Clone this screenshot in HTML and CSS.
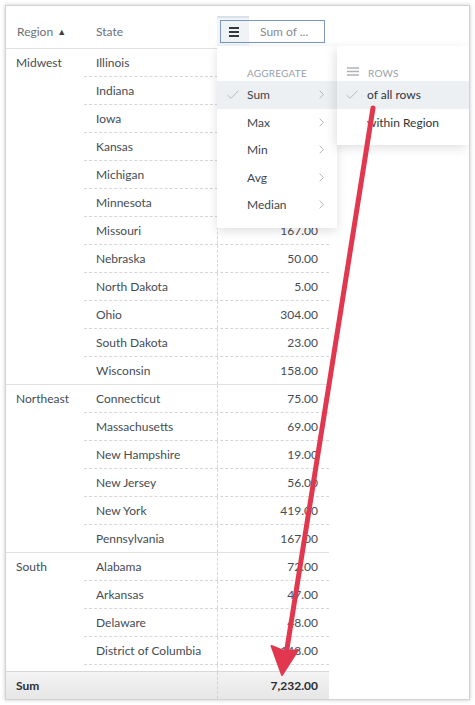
FILE: index.html
```html
<!DOCTYPE html>
<html>
<head>
<meta charset="utf-8">
<link rel="stylesheet" href="styles.css">
</head>
<body>
<div class="card">
  <div class="table">
    <div class="head">
      <div class="h1">Region <span class="sort">&#9650;</span></div>
      <div class="h2">State</div>
      <div class="h3">
        <div class="col-hl"></div>
        <div class="agg-btn">
          <span class="agg-icon"><i></i><i></i><i></i></span>
          <span class="agg-text">Sum of ...</span>
        </div>
      </div>
    </div>
    <div class="rows">
      <div class="group">
        <div class="region">Midwest</div>
        <div class="states">
          <div class="row"><div class="state">Illinois</div><div class="val">262.00</div></div>
          <div class="row"><div class="state">Indiana</div><div class="val">151.00</div></div>
          <div class="row"><div class="state">Iowa</div><div class="val">83.00</div></div>
          <div class="row"><div class="state">Kansas</div><div class="val">66.00</div></div>
          <div class="row"><div class="state">Michigan</div><div class="val">228.00</div></div>
          <div class="row"><div class="state">Minnesota</div><div class="val">122.00</div></div>
          <div class="row"><div class="state">Missouri</div><div class="val">167.00</div></div>
          <div class="row"><div class="state">Nebraska</div><div class="val">50.00</div></div>
          <div class="row"><div class="state">North Dakota</div><div class="val">5.00</div></div>
          <div class="row"><div class="state">Ohio</div><div class="val">304.00</div></div>
          <div class="row"><div class="state">South Dakota</div><div class="val">23.00</div></div>
          <div class="row"><div class="state">Wisconsin</div><div class="val">158.00</div></div>
        </div>
      </div>
      <div class="group">
        <div class="region">Northeast</div>
        <div class="states">
          <div class="row"><div class="state">Connecticut</div><div class="val">75.00</div></div>
          <div class="row"><div class="state">Massachusetts</div><div class="val">69.00</div></div>
          <div class="row"><div class="state">New Hampshire</div><div class="val">19.00</div></div>
          <div class="row"><div class="state">New Jersey</div><div class="val">56.00</div></div>
          <div class="row"><div class="state">New York</div><div class="val">419.00</div></div>
          <div class="row"><div class="state">Pennsylvania</div><div class="val">167.00</div></div>
        </div>
      </div>
      <div class="group">
        <div class="region">South</div>
        <div class="states">
          <div class="row"><div class="state">Alabama</div><div class="val">72.00</div></div>
          <div class="row"><div class="state">Arkansas</div><div class="val">47.00</div></div>
          <div class="row"><div class="state">Delaware</div><div class="val">48.00</div></div>
          <div class="row"><div class="state">District of Columbia</div><div class="val">148.00</div></div>
          <div class="row"><div class="state"></div><div class="val"></div></div>
        </div>
      </div>
    </div>
    <div class="foot">
      <div class="f1">Sum</div>
      <div class="f2">7,232.00</div>
    </div>
  </div>

  <div class="menu">
    <div class="menu-label">AGGREGATE</div>
    <div class="item active">
      <svg class="check" width="12" height="9" viewBox="0 0 12 9"><polyline points="0.5,5 4,8.3 11.5,0.7" fill="none" stroke="#b4b8bd" stroke-width="1"/></svg>
      <span>Sum</span>
      <svg class="chev" width="5" height="9" viewBox="0 0 5 9"><polyline points="0.6,0.6 4.4,4.5 0.6,8.4" fill="none" stroke="#b4b8bd" stroke-width="1"/></svg>
    </div>
    <div class="item"><span>Max</span><svg class="chev" width="5" height="9" viewBox="0 0 5 9"><polyline points="0.6,0.6 4.4,4.5 0.6,8.4" fill="none" stroke="#b4b8bd" stroke-width="1"/></svg></div>
    <div class="item"><span>Min</span><svg class="chev" width="5" height="9" viewBox="0 0 5 9"><polyline points="0.6,0.6 4.4,4.5 0.6,8.4" fill="none" stroke="#b4b8bd" stroke-width="1"/></svg></div>
    <div class="item"><span>Avg</span><svg class="chev" width="5" height="9" viewBox="0 0 5 9"><polyline points="0.6,0.6 4.4,4.5 0.6,8.4" fill="none" stroke="#b4b8bd" stroke-width="1"/></svg></div>
    <div class="item"><span>Median</span><svg class="chev" width="5" height="9" viewBox="0 0 5 9"><polyline points="0.6,0.6 4.4,4.5 0.6,8.4" fill="none" stroke="#b4b8bd" stroke-width="1"/></svg></div>
  </div>

  <div class="submenu">
    <div class="menu-label">
      <svg class="rows-icon" width="12" height="9" viewBox="0 0 12 9"><path d="M0 1h12M0 4.5h12M0 8h12" stroke="#aeb3b8" stroke-width="1.4"/></svg>
      ROWS
    </div>
    <div class="item active">
      <svg class="check" width="12" height="9" viewBox="0 0 12 9"><polyline points="0.5,5 4,8.3 11.5,0.7" fill="none" stroke="#b4b8bd" stroke-width="1"/></svg>
      <span class="sub-text">of all rows</span>
    </div>
    <div class="item"><span class="sub-text">within Region</span></div>
  </div>
</div>

<svg class="arrow" width="475" height="705" viewBox="0 0 475 705">
  <line x1="373" y1="108" x2="286" y2="655" stroke="#e2384f" stroke-width="5" stroke-linecap="round"/>
  <polygon points="282,675 271.5,646 285,651.5 298,650" fill="#e2384f" stroke="#e2384f" stroke-width="2" stroke-linejoin="round"/>
</svg>
</body>
</html>
```

FILE: styles.css
```css
* { box-sizing: border-box; }
html, body { margin: 0; padding: 0; background: #fff; }
body {
  position: relative;
  width: 475px;
  height: 705px;
  overflow: hidden;
  font-family: Lato, "Noto Sans", sans-serif;
  font-size: 12px;
  color: #464c53;
}
.card {
  position: relative;
  margin: 5px;
  width: 465px;
  height: 695px;
  border: 1px solid #d2d2d2;
  box-shadow: 0 0 4px rgba(0, 0, 0, 0.22);
  background: #fff;
  overflow: hidden;
}
.table { width: 323px; }

.head {
  display: flex;
  height: 43px;
  border-bottom: 1px solid #dfe1e4;
  color: #6b7178;
  line-height: 16px;
}
.h1 { width: 78px; padding: 18px 0 0 11px; }
.sort { font-size: 9px; color: #3d4247; position: relative; top: -1px; margin-left: 1px; }
.h2 { width: 133px; padding: 18px 0 0 12px; }
.h3 { width: 112px; position: relative; padding: 14px 0 0 3px; }
.col-hl {
  position: absolute;
  left: 0;
  top: 10px;
  width: 32px;
  height: 32px;
  background: #f2f5f8;
  border-top: 2px solid #d8e2ed;
}
.agg-btn {
  position: relative;
  display: flex;
  align-items: center;
  width: 105px;
  height: 23px;
  border: 1px solid #7b98bb;
  background: #fff;
}
.agg-icon {
  display: flex;
  flex-direction: column;
  justify-content: space-between;
  width: 28px;
  height: 100%;
  padding: 6px 10px 5px 8px;
  background: #eff2f6;
}
.agg-icon i { display: block; height: 2px; background: #33383d; }
.agg-text { padding-left: 11px; color: #858b91; }

.rows { height: 622px; overflow: hidden; }
.group { display: flex; border-bottom: 1px solid #dfe1e4; }
.region { width: 78px; padding-left: 10px; line-height: 27px; }
.states { width: 245px; }
.row { display: flex; height: 28px; border-bottom: 1px dashed #d4d7da; }
.row:last-child { height: 27px; border-bottom: 0; }
.state { width: 133px; padding-left: 12px; line-height: 27px; white-space: nowrap; }
.val {
  width: 112px;
  border-left: 1px dashed #d4d7da;
  text-align: right;
  padding-right: 11px;
  line-height: 27px;
}

.foot {
  display: flex;
  height: 28px;
  border-top: 1px solid #d6d8da;
  background: linear-gradient(#f3f3f3, #e6e6e6);
  font-weight: bold;
  color: #2a2e32;
  line-height: 27px;
}
.f1 { width: 211px; padding-left: 10px; }
.f2 { width: 112px; border-left: 1px dashed #cfd2d5; text-align: right; padding-right: 11px; }

.menu, .submenu {
  position: absolute;
  top: 40px;
  background: #fff;
  padding: 20px 0 8px;
  color: #40464c;
}
.menu {
  left: 211px;
  width: 120px;
  height: 182px;
  box-shadow: 0 3px 10px rgba(0, 0, 0, 0.13);
  z-index: 2;
}
.submenu {
  left: 331px;
  width: 132px;
  height: 99px;
  box-shadow: -2px 3px 10px rgba(0, 0, 0, 0.12);
  z-index: 3;
}
.menu-label {
  position: relative;
  height: 14px;
  line-height: 14px;
  margin-bottom: 1px;
  padding-left: 30px;
  font-size: 10px;
  letter-spacing: 0.2px;
  color: #9aa0a6;
}
.submenu .menu-label { padding-left: 31px; }
.rows-icon { position: absolute; left: 10px; top: 1px; }
.item {
  position: relative;
  display: flex;
  align-items: center;
  height: 27.5px;
  padding-left: 30px;
}
.item.active { background: #edf0f3; }
.check { position: absolute; left: 10px; top: 9px; }
.submenu .check { left: 9px; }
.chev { position: absolute; right: 13px; top: 9px; }
.sub-text { color: #30353a; }

.arrow { position: absolute; left: 0; top: 0; z-index: 10; pointer-events: none; }
```
